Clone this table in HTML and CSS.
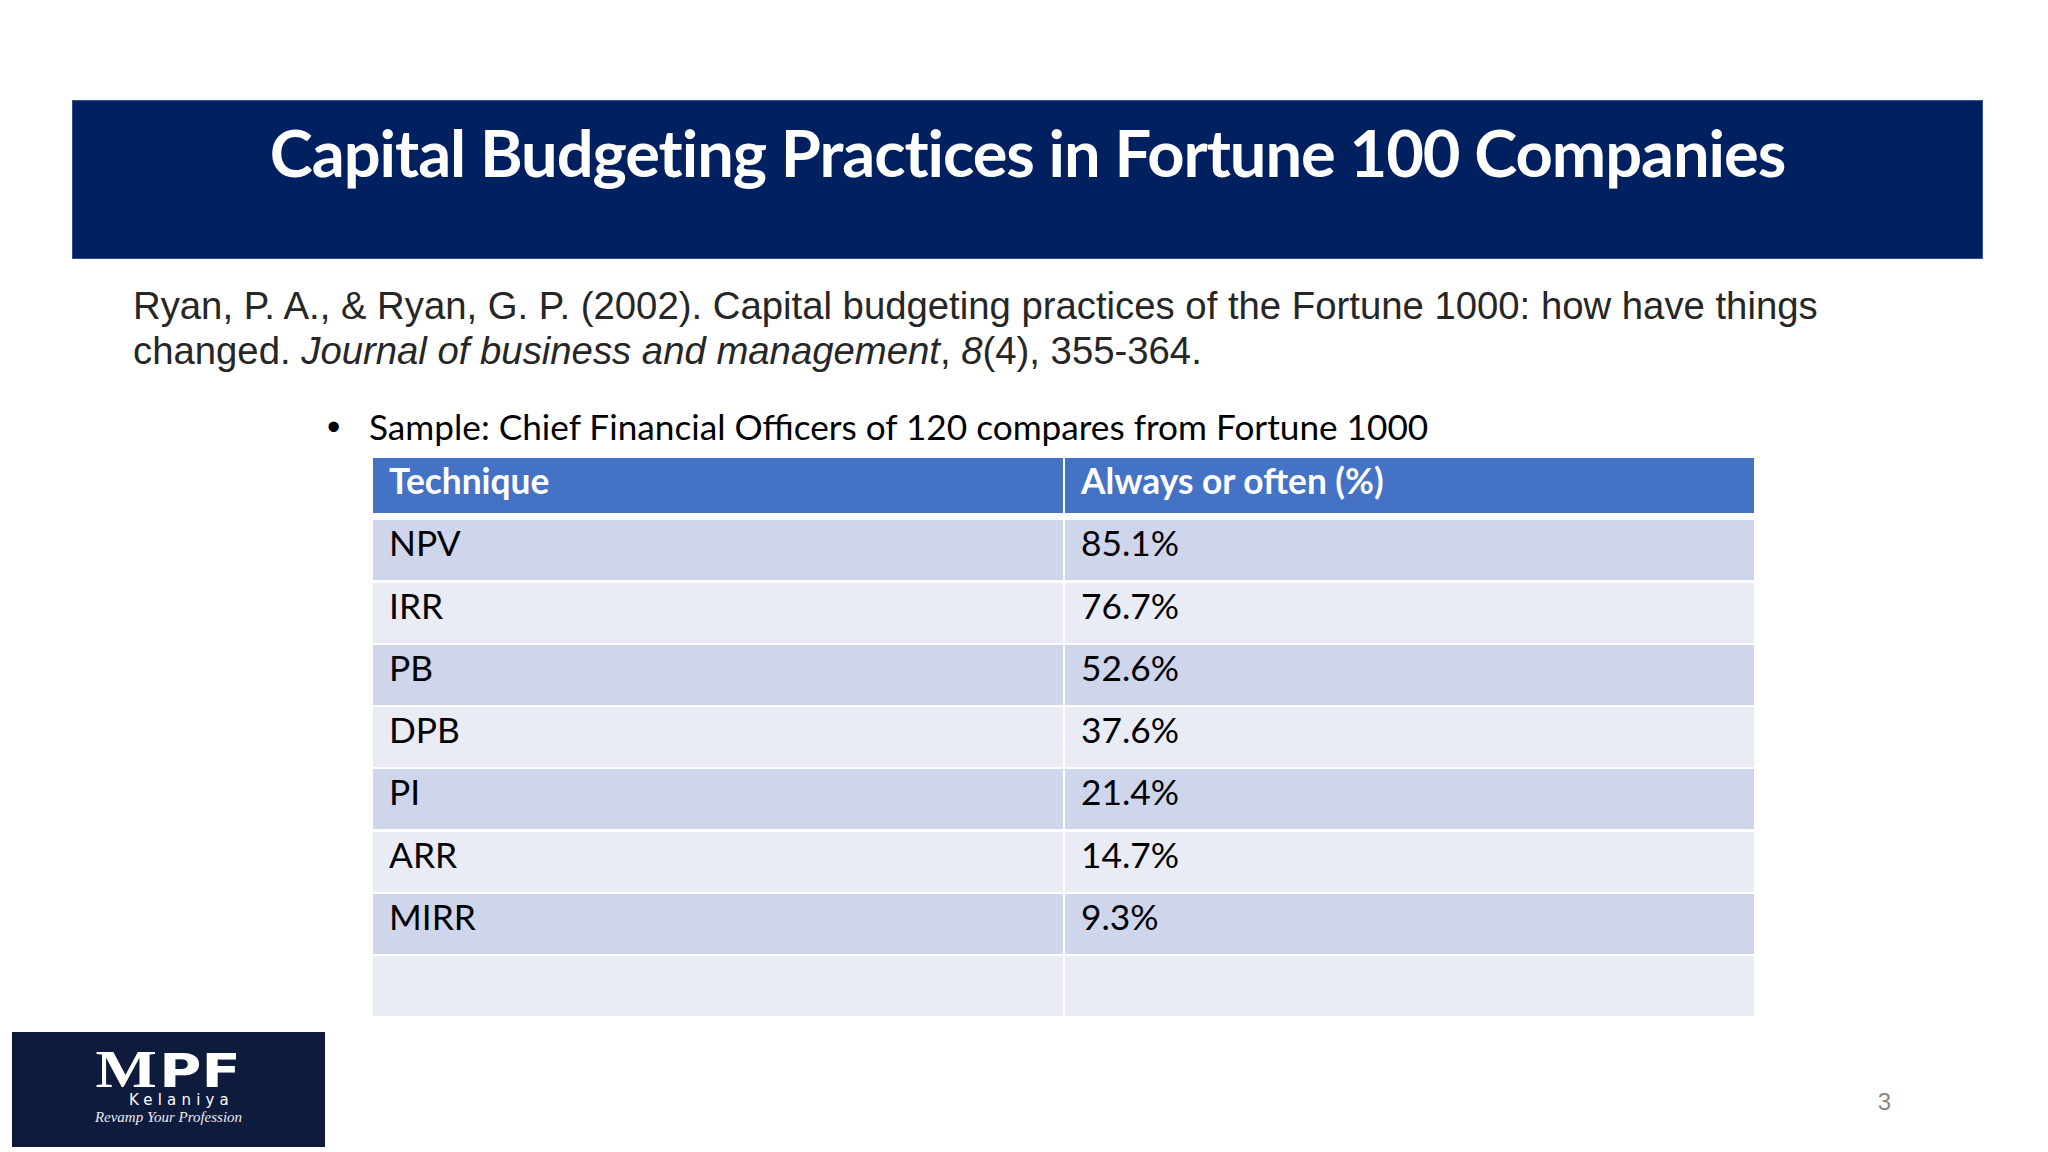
FILE: index.html
```html
<!DOCTYPE html>
<html lang="en">
<head>
<meta charset="utf-8">
<title>Capital Budgeting Practices in Fortune 100 Companies</title>
<link rel="stylesheet" href="styles.css">
</head>
<body>
<div class="slide">
  <header class="title-bar">
    <h1 class="title">Capital Budgeting Practices in Fortune 100 Companies</h1>
  </header>

  <p class="citation">Ryan, P. A., &amp; Ryan, G. P. (2002). Capital budgeting practices of the Fortune 1000: how have things<br><span>changed. </span><em>Journal of business and management</em><span>, </span><em>8</em><span>(4), 355-364.</span></p>

  <div class="bullet">
    <span class="bullet-dot">&bull;</span>
    <span class="bullet-text">Sample: Chief Financial Officers of 120 compares from Fortune 1000</span>
  </div>

  <div class="data-table">
    <div class="cell head">Technique</div>
    <div class="cell head">Always or often (%)</div>
    <div class="cell odd">NPV</div><div class="cell odd">85.1%</div>
    <div class="cell even">IRR</div><div class="cell even">76.7%</div>
    <div class="cell odd">PB</div><div class="cell odd">52.6%</div>
    <div class="cell even">DPB</div><div class="cell even">37.6%</div>
    <div class="cell odd">PI</div><div class="cell odd">21.4%</div>
    <div class="cell even">ARR</div><div class="cell even">14.7%</div>
    <div class="cell odd">MIRR</div><div class="cell odd">9.3%</div>
    <div class="cell even"></div><div class="cell even"></div>
  </div>

  <footer class="footer">
    <div class="logo">
      <div class="logo-mark"><span class="mark-m">M</span><span class="mark-pf">PF</span></div>
      <div class="logo-name">Kelaniya</div>
      <div class="logo-tag">Revamp Your Profession</div>
    </div>
    <div class="page-num">3</div>
  </footer>
</div>
</body>
</html>
```

FILE: styles.css
```css
html, body {
  margin: 0;
  padding: 0;
  background: #ffffff;
}

.slide {
  width: 2048px;
  height: 1152px;
  overflow: hidden;
  padding-top: 100px;
  box-sizing: border-box;
  background: #ffffff;
}

.title-bar {
  margin-left: 72px;
  width: 1911px;
  height: 159px;
  box-sizing: border-box;
  background: #002060;
  border: 1px solid #2f4f8f;
  padding-top: 19px;
}

.title {
  margin: 0;
  font-family: Lato, "Open Sans", sans-serif;
  font-weight: 700;
  font-size: 65px;
  letter-spacing: -1.05px;
  line-height: 1;
  color: #ffffff;
  text-align: center;
}

.citation {
  margin: 24px 0 0 133px;
  width: 1800px;
  font-family: "Liberation Sans", Arial, sans-serif;
  font-size: 38.3px;
  line-height: 45px;
  color: #262626;
}

.citation em {
  font-style: italic;
}

.bullet {
  display: flex;
  align-items: baseline;
  margin: 33px 0 0 0;
  font-family: Lato, "Open Sans", sans-serif;
  font-size: 35.2px;
  line-height: 40px;
  color: #000000;
}

.bullet-dot {
  width: 42px;
  margin-left: 327px;
  font-family: "Liberation Sans", Arial, sans-serif;
  font-size: 38px;
}

.data-table {
  display: grid;
  grid-template-columns: 690px 689px;
  column-gap: 2px;
  row-gap: 2.3px;
  grid-auto-rows: 60px;
  margin: 11px 0 0 373px;
  width: 1381px;
  font-family: Lato, "Open Sans", sans-serif;
  font-size: 35.3px;
  line-height: 1.2;
  color: #000000;
}

.cell {
  padding: 2px 16px 0 16px;
  box-sizing: border-box;
}

.cell.head {
  background: #4472c4;
  color: #ffffff;
  font-weight: 700;
  height: 55px;
  margin-bottom: 2px;
  align-self: start;
}

.cell.odd {
  background: #cfd5ea;
}

.cell.even {
  background: #e9ebf5;
}

.footer {
  display: flex;
  justify-content: space-between;
  align-items: flex-start;
  margin-top: 16px;
  padding: 0 157px 0 12px;
}

.logo {
  width: 313px;
  height: 115px;
  box-sizing: border-box;
  background: #0e1b3c;
  color: #ffffff;
  display: flex;
  flex-direction: column;
  align-items: center;
  padding-top: 15px;
}

.logo-mark {
  display: flex;
  align-items: baseline;
  height: 46px;
  line-height: 46px;
  transform: scaleX(1.25);
}

.mark-m {
  font-family: "Liberation Serif", "Times New Roman", serif;
  font-weight: 700;
  font-size: 52px;
  margin-right: 2px;
}

.mark-pf {
  font-family: "DejaVu Sans", "Liberation Sans", sans-serif;
  font-weight: 700;
  font-size: 46px;
  letter-spacing: 0px;
}

.logo-name {
  font-family: "DejaVu Sans", "Liberation Sans", sans-serif;
  font-size: 15px;
  line-height: 15px;
  letter-spacing: 5.2px;
  margin-left: 26px;
}

.logo-tag {
  margin-top: 2px;
  font-family: "Liberation Serif", "Times New Roman", serif;
  font-style: italic;
  font-size: 15px;
  line-height: 15px;
  color: #e8ecf4;
}

.page-num {
  margin-top: 58px;
  font-family: "Liberation Sans", Arial, sans-serif;
  font-size: 24px;
  line-height: 24px;
  color: #898989;
}
```
